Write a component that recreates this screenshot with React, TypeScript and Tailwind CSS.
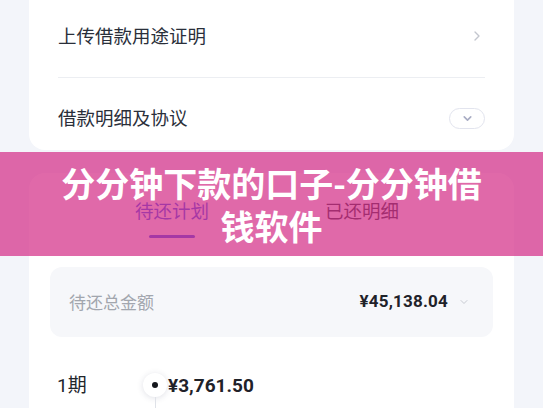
import { ChevronRight, ChevronDown } from 'lucide-react';

const cjk = { fontFamily: '"Noto Sans CJK SC", "Noto Sans", sans-serif' };
const num = { fontFamily: 'Roboto, "Noto Sans CJK SC", sans-serif' };

export default function App() {
  return (
    <div className="relative h-[408px] w-[543px] overflow-hidden bg-[#f3f5fa]" style={cjk}>
      <div className="px-[29px]">
        {/* top card, its top is cut off */}
        <div className="rounded-b-[16px] bg-white px-[29px]">
          <div className="flex h-[77px] items-center justify-between pb-[5px]">
            <span className="text-[18.5px] text-[#2a2f3a]">上传借款用途证明</span>
            <ChevronRight className="h-[16px] w-[16px] text-[#c3c6ce]" strokeWidth={2} />
          </div>
          <div className="h-px bg-[#eceef2]" />
          <div className="flex h-[72px] items-center justify-between pt-[8px]">
            <span className="text-[18.5px] text-[#2a2f3a]">借款明细及协议</span>
            <div className="flex h-[21px] w-[36px] items-center justify-center rounded-full border border-[#e2e4ee]">
              <ChevronDown className="h-[13px] w-[13px] text-[#a9adc4]" strokeWidth={3} />
            </div>
          </div>
        </div>

        {/* repayment card */}
        <div className="mt-[23px] h-[300px] rounded-t-[16px] bg-white px-[21px]">
          <div className="flex pl-[85px] pt-[24px]">
            <div className="flex flex-col items-center">
              <span className="text-[18.5px] leading-[26px] text-[#3a5cf0]">待还计划</span>
              <div className="mt-[12px] h-[3px] w-[46px] rounded-full bg-[#3a5cf0]" />
            </div>
            <span className="ml-[116px] text-[18.5px] leading-[26px] text-[#333740]">已还明细</span>
          </div>

          <div className="mt-[29px] flex h-[70px] items-center justify-between rounded-[12px] bg-[#f6f7fa] pl-[19px] pr-[23px]">
            <span className="text-[17px] text-[#a2a6ae]">待还总金额</span>
            <div className="flex items-center gap-[10px]">
              <span className="text-[17px] font-bold tracking-[0.2px] text-[#1f2229]" style={num}>¥45,138.04</span>
              <ChevronDown className="h-[12px] w-[12px] text-[#c8cbd2]" strokeWidth={2} />
            </div>
          </div>

          <div className="relative mt-[36px] flex">
            <div className="w-[93px] pl-[7px]">
              <div className="text-[19px] leading-[26px] text-[#22252b]" style={num}>1期</div>
              <div className="mt-[10px] text-[13px] text-[#a2a6ae]">2024/03/28</div>
            </div>
            <div className="flex w-[24px] flex-col items-center">
              <div className="flex h-[24px] w-[24px] items-center justify-center rounded-full bg-white shadow-[0_1px_6px_rgba(40,50,90,0.15)]">
                <div className="h-[6px] w-[6px] rounded-full bg-[#15171c]" />
              </div>
              <div className="h-[40px] w-px bg-[#dfe2e8]" />
            </div>
            <div className="pl-[1px]">
              <div className="text-[19px] font-bold leading-[26px] text-[#1f2229]" style={num}>¥3,761.50</div>
              <div className="mt-[10px] flex text-[13px] text-[#3a3d44]">
                <span>本金</span>
                <span className="ml-[74px]">利息</span>
              </div>
            </div>
          </div>
        </div>
      </div>

      {/* watermark band over the page */}
      <div className="absolute left-0 right-0 top-[152px] flex h-[104px] flex-col items-center justify-center bg-[#d32a85]/70">
        <div className="text-center text-[34px] font-bold leading-[43px] text-white">
          <div>分分钟下款的口子-分分钟借</div>
          <div>钱软件</div>
        </div>
      </div>
    </div>
  );
}
